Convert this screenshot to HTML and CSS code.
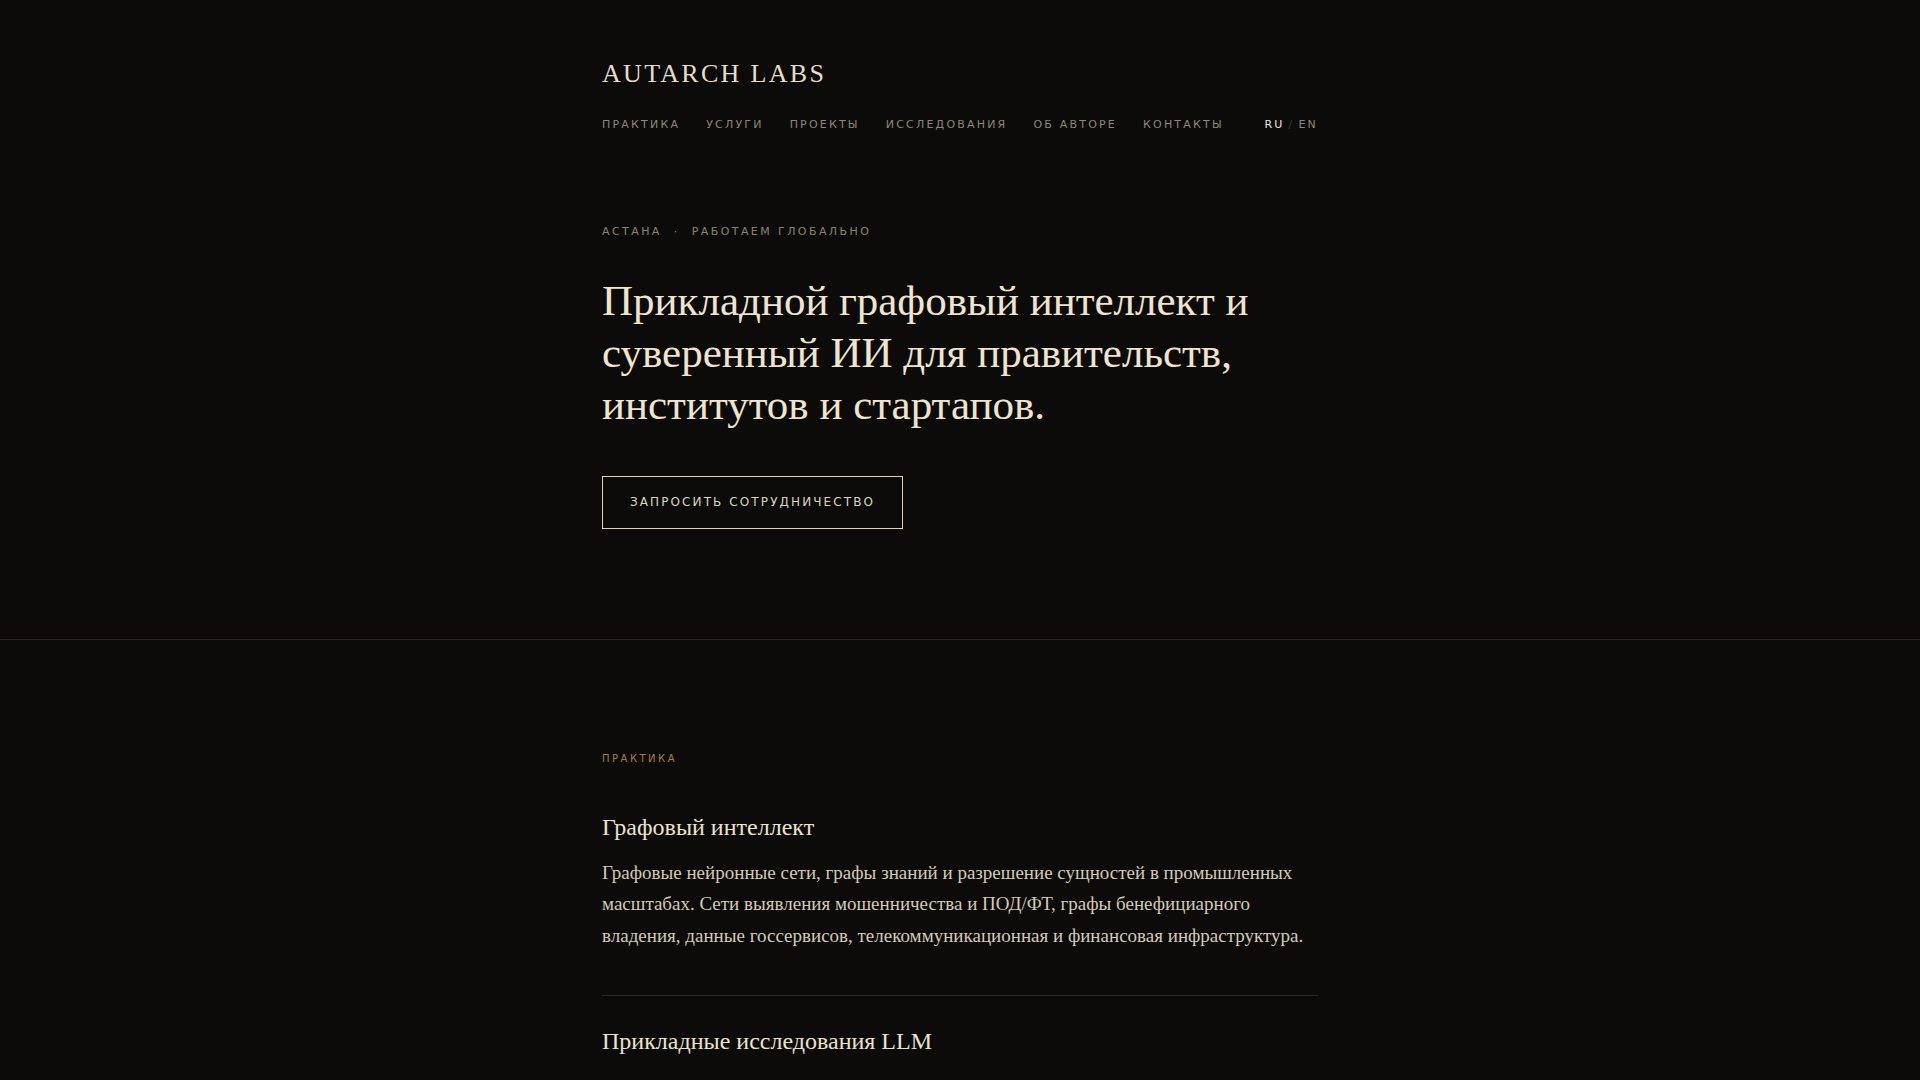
FILE: index.html
```html
<!DOCTYPE html>
<html lang="ru">
<head>
<meta charset="utf-8">
<title>Autarch Labs</title>
<link rel="stylesheet" href="styles.css">
</head>
<body>
<header class="hero">
  <div class="wrap">
    <div class="logo">AUTARCH LABS</div>
    <nav class="nav">
      <ul class="nav-links">
        <li>ПРАКТИКА</li>
        <li>УСЛУГИ</li>
        <li>ПРОЕКТЫ</li>
        <li>ИССЛЕДОВАНИЯ</li>
        <li>ОБ АВТОРЕ</li>
        <li>КОНТАКТЫ</li>
      </ul>
      <div class="lang"><span class="lang-on">RU</span><span class="lang-sep">/</span><span class="lang-off">EN</span></div>
    </nav>
    <div class="eyebrow"><span>АСТАНА</span><span class="dot">·</span><span>РАБОТАЕМ ГЛОБАЛЬНО</span></div>
    <h1 class="title">Прикладной графовый интеллект и суверенный ИИ для правительств, институтов и стартапов.</h1>
    <div class="cta-row"><a class="cta">ЗАПРОСИТЬ СОТРУДНИЧЕСТВО</a></div>
  </div>
</header>
<section class="practice">
  <div class="wrap">
    <div class="label">ПРАКТИКА</div>
    <article class="item">
      <h3 class="item-title">Графовый интеллект</h3>
      <p class="item-text">Графовые нейронные сети, графы знаний и разрешение сущностей в промышленных масштабах. Сети выявления мошенничества и ПОД/ФТ, графы бенефициарного владения, данные госсервисов, телекоммуникационная и финансовая инфраструктура.</p>
    </article>
    <article class="item">
      <h3 class="item-title">Прикладные исследования LLM</h3>
    </article>
  </div>
</section>
</body>
</html>
```

FILE: styles.css
```css
html, body {
  margin: 0;
  padding: 0;
  background: #0c0b09;
  color: #e9e0cd;
}
body {
  font-family: "Liberation Serif", "Times New Roman", serif;
  min-height: 1080px;
  overflow: hidden;
}
.wrap {
  width: 716px;
  margin: 0 auto;
  display: flex;
  flex-direction: column;
}
.hero {
  padding: 59px 0 110px;
  border-bottom: 1px solid #2b2620;
}
.logo {
  font-size: 26px;
  line-height: 30px;
  letter-spacing: 2.3px;
  color: #e6ddca;
}
.nav {
  margin-top: 28px;
  display: flex;
  justify-content: space-between;
  align-items: center;
  font-family: "DejaVu Sans", sans-serif;
  font-size: 11px;
  line-height: 16px;
  letter-spacing: 0.2em;
}
.nav-links {
  list-style: none;
  margin: 0;
  padding: 0;
  display: flex;
  gap: 26px;
  color: #8c867b;
}
.lang {
  display: flex;
  gap: 4px;
  font-size: 11px;
}
.lang-on { color: #ebe6dc; }
.lang-sep { color: #3c3832; }
.lang-off { color: #8c867b; }
.eyebrow {
  margin-top: 91px;
  font-family: "DejaVu Sans", sans-serif;
  font-size: 11px;
  line-height: 16px;
  letter-spacing: 0.22em;
  color: #8a8379;
  display: flex;
  gap: 12px;
}
.title {
  margin: 35px 0 0;
  font-weight: normal;
  font-size: 43px;
  line-height: 52px;
  color: #eee4d0;
}
.cta-row {
  margin-top: 45px;
  display: flex;
}
.cta {
  display: block;
  border: 1px solid #ddd3bf;
  padding: 18px 27px 18px 27px;
  font-family: "DejaVu Sans", sans-serif;
  font-size: 12px;
  line-height: 15px;
  letter-spacing: 2.1px;
  color: #ddd4c2;
}
.practice {
  padding-top: 111px;
}
.label {
  font-family: "DejaVu Sans", sans-serif;
  font-size: 10px;
  line-height: 16px;
  letter-spacing: 0.25em;
  color: #a87f47;
}
.item {
  padding: 45px 0 44px;
  border-bottom: 1px solid #2a2724;
}
.item + .item {
  padding-top: 30px;
  border-bottom: none;
}
.item-title {
  margin: 0;
  font-weight: normal;
  font-size: 24px;
  line-height: 30px;
  color: #ebe2cf;
}
.item-text {
  margin: 15px 0 0;
  font-size: 19px;
  line-height: 31.3px;
  color: #d3cab8;
}
```
